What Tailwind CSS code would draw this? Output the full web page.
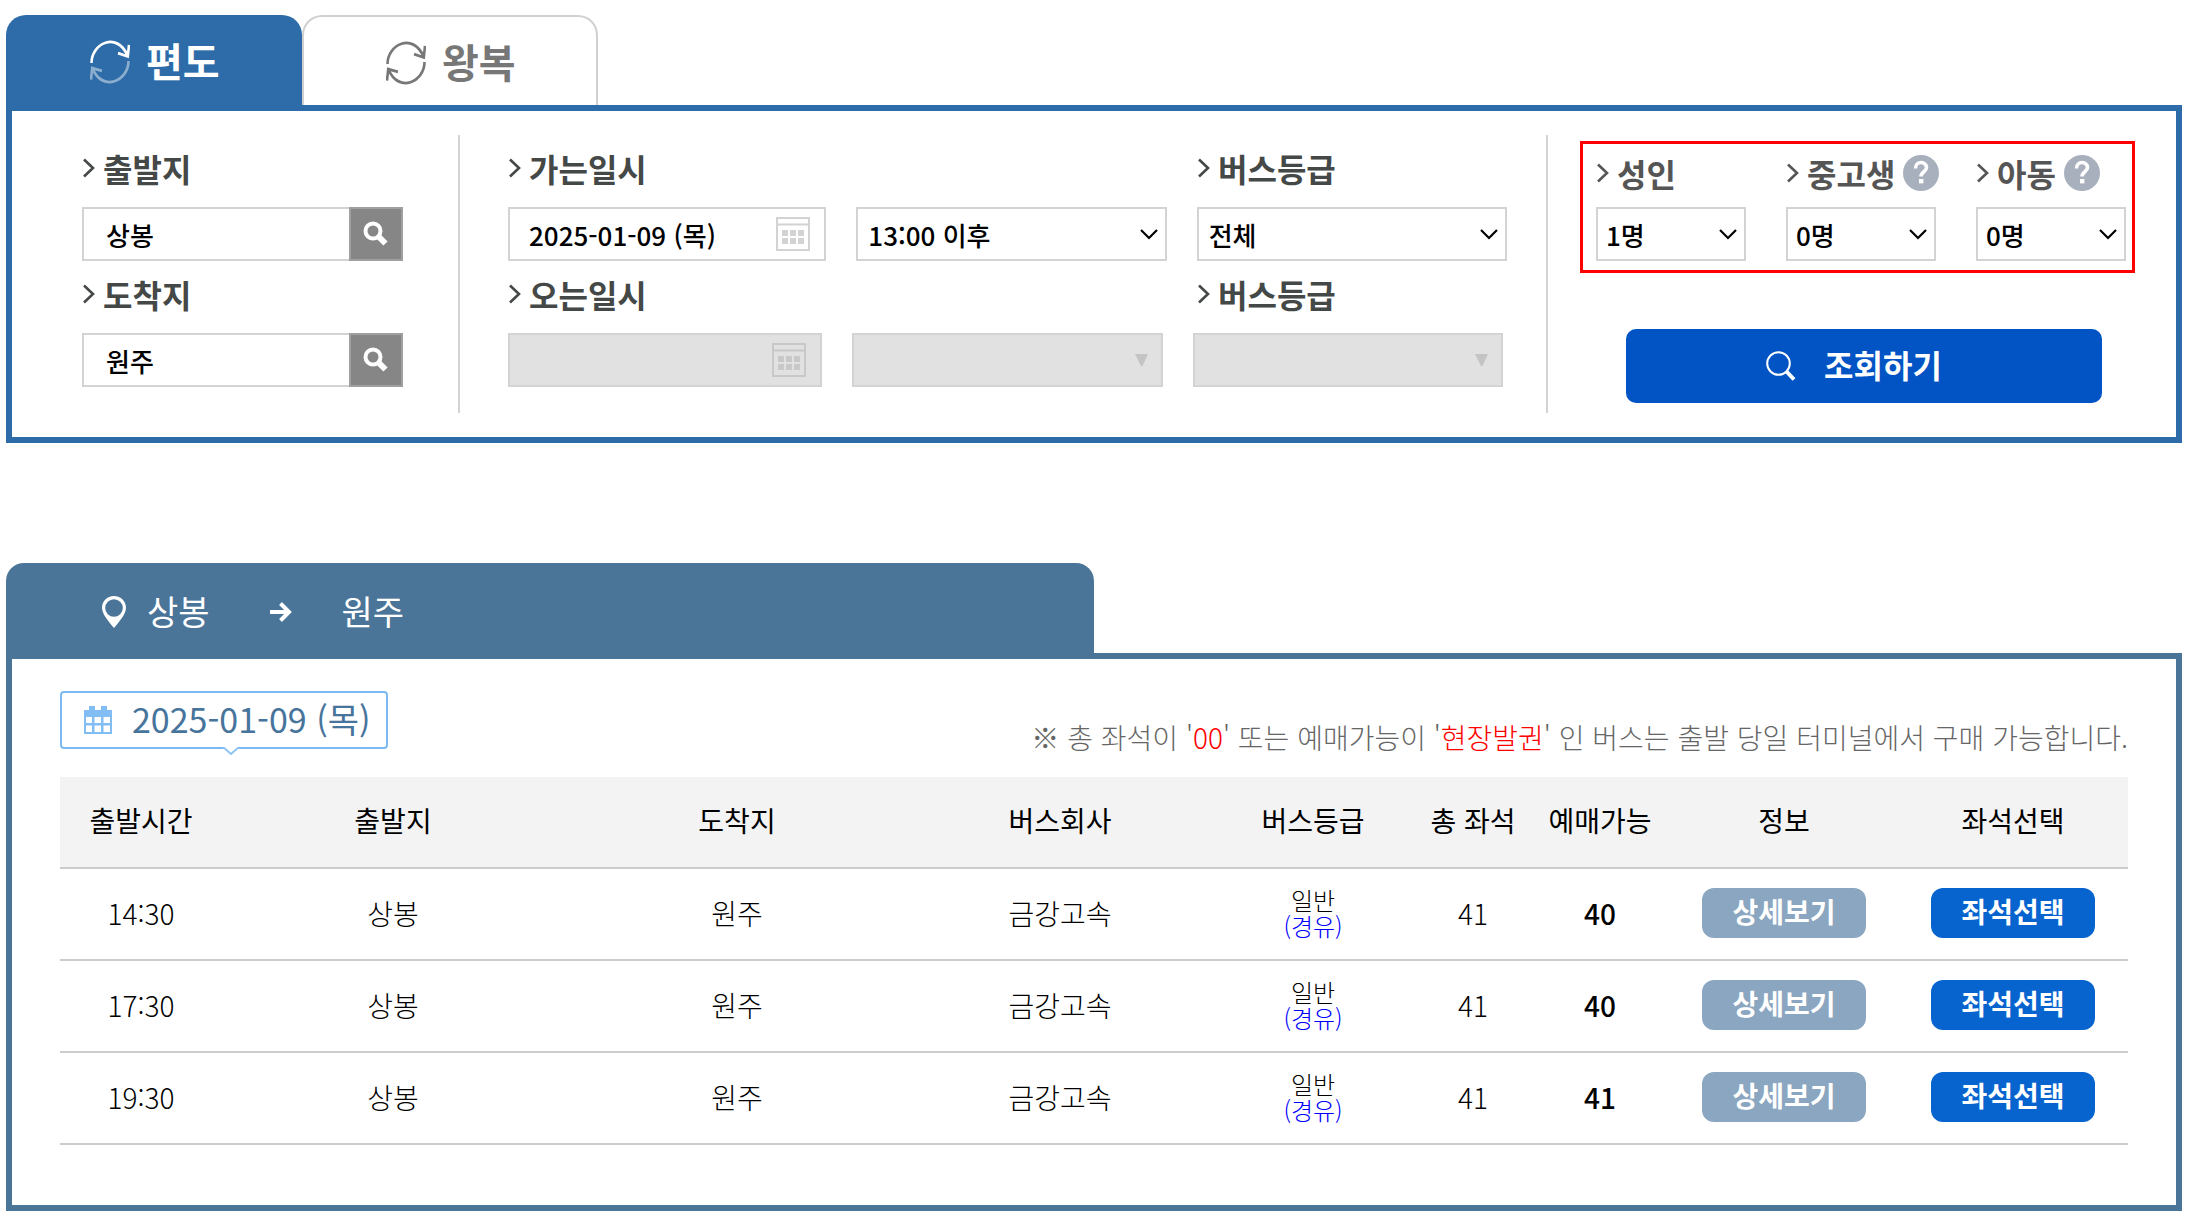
<!DOCTYPE html>
<html lang="ko">
<head>
<meta charset="utf-8">
<meta name="viewport" content="width=device-width, initial-scale=1">
<title>시외버스 예매</title>
<script src="https://cdn.jsdelivr.net/npm/@tailwindcss/browser@4"></script>
</head>
<body class="bg-white pt-[15px] pl-1.5 pr-3 font-['Noto_Sans_CJK_KR',sans-serif] text-[28px] text-black">
<svg class="hidden" aria-hidden="true">
  <symbol id="gt" viewBox="0 0 13 20"><path d="M2 1.500 11 10 2 18.500" fill="none" stroke="currentColor" stroke-width="2.600"/></symbol>
  <symbol id="down" viewBox="0 0 18 12"><path d="M1 2 9 10 17 2" fill="none" stroke="currentColor" stroke-width="2.200"/></symbol>
  <symbol id="cal" viewBox="0 0 34 34"><path d="M1 1H33V33H1ZM1 7.500H33" fill="none" stroke="currentColor" stroke-width="2"/><path d="M6 13h6v6H6zM14 13h6v6h-6zM22 13h6v6h-6zM6 21h6v6H6zM14 21h6v6h-6zM22 21h6v6h-6z" fill="currentColor"/></symbol>
  <symbol id="lens" viewBox="0 0 26 26"><circle cx="10" cy="10" r="7.500" fill="none" stroke="currentColor" stroke-width="4"/><path d="M15.500 15.500 22.500 22.500" stroke="currentColor" stroke-width="6"/></symbol>
  <symbol id="help" viewBox="0 0 36 36"><circle cx="18" cy="18" r="18" fill="#a8b0bd"/><path d="M12.500 13.500C12.500 5.500 23.500 6 23.500 12.500C23.500 17 18 16.500 18 21.500" fill="none" stroke="#fff" stroke-width="3.600"/><rect x="16" y="24" width="4.400" height="4.400" fill="#fff"/></symbol>
</svg>

<main>
<section>
  <div class="flex" role="tablist">
    <button type="button" role="tab" aria-selected="true" class="flex h-[90px] w-[296px] items-center gap-4 rounded-t-[20px] bg-[#2d6ca8] pl-[84px] text-[40px] font-bold text-white">
      <svg class="mt-1 h-11 w-10" viewBox="0 0 40 40" preserveAspectRatio="none" fill="none" stroke="currentColor" stroke-width="2.600"><path d="M1.500 21C1.500 3 27 -8 37.500 14M39 4.500 37.800 15 28 12"/><g opacity=".45"><path d="M38.500 19C38.500 37 13 48 2.500 26M1 36 2.200 25.500 12 28"/></g></svg>
      <span>편도</span>
    </button>
    <button type="button" role="tab" aria-selected="false" class="flex h-[90px] w-[296px] items-center gap-4 rounded-t-[20px] border-2 border-b-0 border-[#d0d0d0] pl-[82px] text-[40px] font-bold text-[#777]">
      <svg class="mt-1 h-11 w-10" viewBox="0 0 40 40" preserveAspectRatio="none" fill="none" stroke="currentColor" stroke-width="2.600"><path d="M1.500 21C1.500 3 27 -8 37.500 14M39 4.500 37.800 15 28 12"/><path d="M38.500 19C38.500 37 13 48 2.500 26M1 36 2.200 25.500 12 28"/></svg>
      <span>왕복</span>
    </button>
  </div>

  <form class="grid grid-cols-[minmax(0,448fr)_minmax(0,1088fr)_minmax(0,628fr)] border-6 border-[#2d6ca8] py-6" onsubmit="return false">
    <div class="flex flex-col border-r-2 border-[#d3d3d3] pt-[13px] pr-[55px] pb-[26px] pl-[70px]">
      <label for="from" class="mb-[19px] flex h-10 items-center gap-2 text-[32px] font-bold text-[#444847]"><svg class="h-5 w-[13px]"><use href="#gt"/></svg>출발지</label>
      <div class="mb-[13px] flex h-[54px]">
        <input id="from" value="상봉" class="min-w-0 flex-1 border-2 border-r-0 border-[#d3d3d3] pl-[22px] text-[26px] font-medium">
        <button type="button" aria-label="출발지 검색" class="grid w-[54px] place-items-center border-2 border-[#a0a0a0] bg-[#868686] text-white"><svg class="size-[26px]"><use href="#lens"/></svg></button>
      </div>
      <label for="to" class="mb-[19px] flex h-10 items-center gap-2 text-[32px] font-bold text-[#444847]"><svg class="h-5 w-[13px]"><use href="#gt"/></svg>도착지</label>
      <div class="flex h-[54px]">
        <input id="to" value="원주" class="min-w-0 flex-1 border-2 border-r-0 border-[#d3d3d3] pl-[22px] text-[26px] font-medium">
        <button type="button" aria-label="도착지 검색" class="grid w-[54px] place-items-center border-2 border-[#a0a0a0] bg-[#868686] text-white"><svg class="size-[26px]"><use href="#lens"/></svg></button>
      </div>
    </div>

    <div class="flex flex-col border-r-2 border-[#d3d3d3] pt-[13px] pr-[39px] pb-[26px] pl-12">
      <div class="mb-[19px] grid grid-cols-[minmax(0,689fr)_minmax(0,310fr)]">
        <label for="go" class="flex h-10 items-center gap-2 text-[32px] font-bold text-[#444847]"><svg class="h-5 w-[13px]"><use href="#gt"/></svg>가는일시</label>
        <label for="grade" class="flex h-10 items-center gap-2 text-[32px] font-bold text-[#444847]"><svg class="h-5 w-[13px]"><use href="#gt"/></svg>버스등급</label>
      </div>
      <div class="mb-[13px] grid h-[54px] grid-cols-[minmax(0,318fr)_minmax(0,310fr)_minmax(0,310fr)] gap-[30px]">
        <div class="grid items-center">
          <input id="go" value="2025-01-09 (목)" class="col-start-1 row-start-1 h-full w-full min-w-0 border-2 border-[#d3d3d3] pl-[19px] text-[26px] font-medium">
          <svg class="pointer-events-none col-start-1 row-start-1 mr-4 size-[34px] justify-self-end text-[#d3d3d3]"><use href="#cal"/></svg>
        </div>
        <div class="grid items-center">
          <select aria-label="출발 시각" class="col-start-1 row-start-1 h-full w-full appearance-none border-2 border-[#d3d3d3] pl-2.5 text-[26px] font-medium"><option>13:00 이후</option></select>
          <svg class="pointer-events-none col-start-1 row-start-1 mr-[9px] h-3 w-[18px] justify-self-end"><use href="#down"/></svg>
        </div>
        <div class="grid items-center">
          <select id="grade" class="col-start-1 row-start-1 h-full w-full appearance-none border-2 border-[#d3d3d3] pl-2.5 text-[26px] font-medium"><option>전체</option></select>
          <svg class="pointer-events-none col-start-1 row-start-1 mr-[9px] h-3 w-[18px] justify-self-end"><use href="#down"/></svg>
        </div>
      </div>
      <div class="mb-[19px] grid grid-cols-[minmax(0,689fr)_minmax(0,310fr)]">
        <label for="back" class="flex h-10 items-center gap-2 text-[32px] font-bold text-[#444847]"><svg class="h-5 w-[13px]"><use href="#gt"/></svg>오는일시</label>
        <label for="grade2" class="flex h-10 items-center gap-2 text-[32px] font-bold text-[#444847]"><svg class="h-5 w-[13px]"><use href="#gt"/></svg>버스등급</label>
      </div>
      <div class="mr-1 grid h-[54px] grid-cols-[minmax(0,314fr)_minmax(0,310fr)_minmax(0,310fr)] gap-[30px] text-[#c8c8c8]">
        <div class="grid items-center">
          <input id="back" disabled class="col-start-1 row-start-1 h-full w-full min-w-0 border-2 border-[#d3d3d3] bg-[#e1e1e1]">
          <svg class="pointer-events-none col-start-1 row-start-1 mr-4 size-[34px] justify-self-end"><use href="#cal"/></svg>
        </div>
        <div class="grid items-center">
          <select aria-label="오는 시각" disabled class="col-start-1 row-start-1 h-full w-full appearance-none border-2 border-[#d3d3d3] bg-[#e1e1e1] opacity-100"></select>
          <svg class="pointer-events-none col-start-1 row-start-1 mr-[15px] h-3 w-[13px] justify-self-end" viewBox="0 0 13 12"><path d="M0 0H13L7.500 12H6Z" fill="#c4c4c4"/></svg>
        </div>
        <div class="grid items-center">
          <select id="grade2" disabled class="col-start-1 row-start-1 h-full w-full appearance-none border-2 border-[#d3d3d3] bg-[#e1e1e1] opacity-100"></select>
          <svg class="pointer-events-none col-start-1 row-start-1 mr-[15px] h-3 w-[13px] justify-self-end" viewBox="0 0 13 12"><path d="M0 0H13L7.500 12H6Z" fill="#c4c4c4"/></svg>
        </div>
      </div>
    </div>

    <div class="flex flex-col pt-1.5 pr-[41px] pl-8">
      <div class="grid grid-cols-3 gap-10 border-3 border-[#fe0000] pt-[9px] pr-1.5 pb-[9px] pl-[13px]">
        <div>
          <label for="adult" class="mb-3.5 flex h-10 items-center gap-2 text-[32px] font-bold text-[#555]"><svg class="h-5 w-[13px]"><use href="#gt"/></svg>성인</label>
          <div class="grid h-[54px] items-center">
            <select id="adult" class="col-start-1 row-start-1 h-full w-full appearance-none border-2 border-[#d3d3d3] pl-2 text-[26px] font-medium"><option>1명</option></select>
            <svg class="pointer-events-none col-start-1 row-start-1 mr-[9px] h-3 w-[18px] justify-self-end"><use href="#down"/></svg>
          </div>
        </div>
        <div>
          <div class="mb-3.5 flex h-10 items-center gap-2 whitespace-nowrap">
            <label for="teen" class="flex items-center gap-2 text-[32px] font-bold text-[#555]"><svg class="h-5 w-[13px]"><use href="#gt"/></svg>중고생</label>
            <button type="button" aria-label="중고생 안내" class="-mr-4 shrink-0"><svg class="size-9"><use href="#help"/></svg></button>
          </div>
          <div class="grid h-[54px] items-center">
            <select id="teen" class="col-start-1 row-start-1 h-full w-full appearance-none border-2 border-[#d3d3d3] pl-2 text-[26px] font-medium"><option>0명</option></select>
            <svg class="pointer-events-none col-start-1 row-start-1 mr-[9px] h-3 w-[18px] justify-self-end"><use href="#down"/></svg>
          </div>
        </div>
        <div>
          <div class="mb-3.5 flex h-10 items-center gap-2 whitespace-nowrap">
            <label for="child" class="flex items-center gap-2 text-[32px] font-bold text-[#555]"><svg class="h-5 w-[13px]"><use href="#gt"/></svg>아동</label>
            <button type="button" aria-label="아동 안내" class="shrink-0"><svg class="size-9"><use href="#help"/></svg></button>
          </div>
          <div class="grid h-[54px] items-center">
            <select id="child" class="col-start-1 row-start-1 h-full w-full appearance-none border-2 border-[#d3d3d3] pl-2 text-[26px] font-medium"><option>0명</option></select>
            <svg class="pointer-events-none col-start-1 row-start-1 mr-[9px] h-3 w-[18px] justify-self-end"><use href="#down"/></svg>
          </div>
        </div>
      </div>
      <button type="submit" class="mt-14 mr-[33px] ml-[46px] flex h-[74px] items-center justify-center gap-7 rounded-[10px] bg-[#0254c4] pr-5 pb-1 text-[32px] font-bold text-white">
        <svg class="mt-1 size-[30px]" viewBox="0 0 30 30" fill="none" stroke="currentColor"><circle cx="12.500" cy="12.500" r="11.300" stroke-width="2"/><path d="M20.500 20.500 28 28.500" stroke-width="4"/></svg>
        조회하기
      </button>
    </div>
  </form>
</section>

<section class="mt-[120px]">
  <h2 class="flex h-[90px] w-1/2 items-center rounded-t-[18px] bg-[#4a7598] pt-1 pl-24 text-[34px] text-white">
    <svg class="mt-1 h-8 w-6" viewBox="0 0 24 32"><path fill-rule="evenodd" fill="currentColor" d="M12 0C5 0 0 5 0 12C0 18 7 26 12 32C17 26 24 18 24 12C24 5 19 0 12 0ZM12 3.200A8.800 8.800 0 1 1 12 20.800A8.800 8.800 0 1 1 12 3.200Z"/></svg>
    <span class="ml-[21px]">상봉</span>
    <svg class="mt-1 mr-[50px] ml-[60px] h-5 w-[22px]" viewBox="0 0 22 20" fill="none" stroke="currentColor" stroke-width="4"><path d="M0 10H19M10.500 1.500 19 10 10.500 18.500"/></svg>
    <span>원주</span>
  </h2>
  <div class="border-6 border-[#4a7598] px-12 pt-8 pb-[60px]">
    <div class="mb-[22px] flex justify-between">
      <div class="relative mb-1.5 flex h-[58px] w-[328px] shrink-0 items-center rounded-[4px] border-2 border-[#7dbaf4] pl-[22px] text-[34px] text-[#47749b]">
        <svg class="mr-5 size-7" viewBox="0 0 28 28"><path fill="#82bdf3" fill-rule="evenodd" d="M0 4H5V0H11V4H17V0H23V4H28V28H0ZM2 11V17H8V11ZM10.500 11V17H17V11ZM19.500 11V17H26V11ZM2 19.500V26H8V19.500ZM10.500 19.500V26H17V19.500ZM19.500 19.500V26H26V19.500Z"/></svg>
        <time datetime="2025-01-09" class="pb-1">2025-01-09 (목)</time>
        <svg class="absolute top-[54px] left-[161px] h-2 w-4" viewBox="0 0 16 8"><path d="M0 0H16L8 8Z" fill="#fff"/><path d="M0 0 8 7 16 0" fill="none" stroke="#8fc4f6" stroke-width="2"/></svg>
      </div>
      <p class="self-end pb-0.5 leading-8 font-light text-[#666]">※ 총 좌석이 '<span class="text-[#fe0000]">00</span>' 또는 예매가능이 '<span class="text-[#fe0000]">현장발권</span>' 인 버스는 출발 당일 터미널에서 구매 가능합니다.</p>
    </div>
    <table class="w-full table-fixed border-separate border-spacing-0 text-center leading-6">
      <thead class="bg-[#f3f3f3]">
        <tr class="h-[92px] *:border-b-2 *:border-[#ccc] *:pb-1 *:font-normal *:whitespace-nowrap">
          <th class="w-[162px]">출발시간</th>
          <th class="w-[342px]">출발지</th>
          <th class="w-[346px]">도착지</th>
          <th class="w-[300px]">버스회사</th>
          <th class="w-[206px]">버스등급</th>
          <th class="w-[114px]">총 좌석</th>
          <th class="w-[140px]">예매가능</th>
          <th class="w-[228px]">정보</th>
          <th class="w-[230px]">좌석선택</th>
        </tr>
      </thead>
      <tbody class="font-light">
        <tr class="h-[92px] *:border-b-2 *:border-[#ccc] *:pb-0.5">
          <td>14:30</td><td>상봉</td><td>원주</td><td>금강고속</td>
          <td class="text-[24px] leading-[26px]">일반<br><span class="text-[#0000fe]">(경유)</span></td>
          <td>41</td><td class="font-medium">40</td>
          <td><button type="button" class="h-[50px] w-[164px] rounded-xl bg-[#8ba6c0] pb-1 font-bold text-white">상세보기</button></td>
          <td><button type="button" class="h-[50px] w-[164px] rounded-xl bg-[#0764cf] pb-1 font-bold text-white">좌석선택</button></td>
        </tr>
        <tr class="h-[92px] *:border-b-2 *:border-[#ccc] *:pb-0.5">
          <td>17:30</td><td>상봉</td><td>원주</td><td>금강고속</td>
          <td class="text-[24px] leading-[26px]">일반<br><span class="text-[#0000fe]">(경유)</span></td>
          <td>41</td><td class="font-medium">40</td>
          <td><button type="button" class="h-[50px] w-[164px] rounded-xl bg-[#8ba6c0] pb-1 font-bold text-white">상세보기</button></td>
          <td><button type="button" class="h-[50px] w-[164px] rounded-xl bg-[#0764cf] pb-1 font-bold text-white">좌석선택</button></td>
        </tr>
        <tr class="h-[92px] *:border-b-2 *:border-[#ccc] *:pb-0.5">
          <td>19:30</td><td>상봉</td><td>원주</td><td>금강고속</td>
          <td class="text-[24px] leading-[26px]">일반<br><span class="text-[#0000fe]">(경유)</span></td>
          <td>41</td><td class="font-medium">41</td>
          <td><button type="button" class="h-[50px] w-[164px] rounded-xl bg-[#8ba6c0] pb-1 font-bold text-white">상세보기</button></td>
          <td><button type="button" class="h-[50px] w-[164px] rounded-xl bg-[#0764cf] pb-1 font-bold text-white">좌석선택</button></td>
        </tr>
      </tbody>
    </table>
  </div>
</section>
</main>
</body>
</html>
